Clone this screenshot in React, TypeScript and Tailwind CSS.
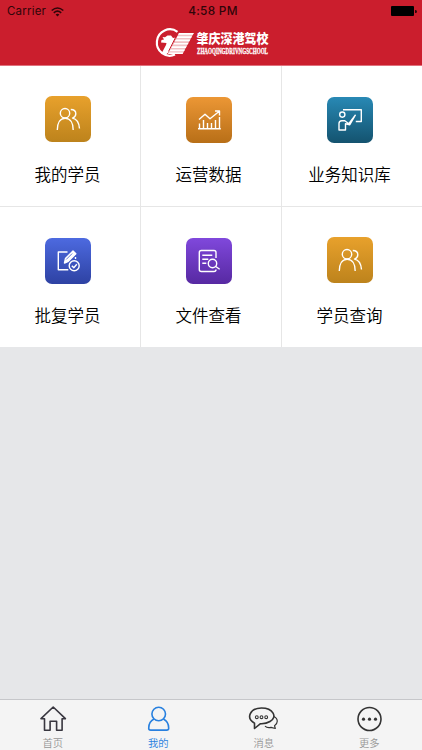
import React from 'react';

const CJK = "font-['Noto_Sans_CJK_SC',sans-serif]";

function People() {
  return (
    <g>
      <circle cx="20" cy="17.200" r="4.700" />
      <path d="M12.300 34c0-7.200 3-11.800 7.900-11.800s8 4.600 8 11.800" />
      <path d="M25.800 13.500c3.200 0 5 1.800 5 4.300 0 2-1 3.500-3.300 4.300 4 .7 6.500 4.200 7 10.400" />
    </g>
  );
}

function Chart() {
  return (
    <g>
      <path d="M13 22.500l6-5.300 5 4.600L33 14.500M29 14h4.500v4.500" />
      <path d="M12 31.700h22.800M13.500 31v-4.500M17.500 31v-8M21.500 31v-5M25.500 31v-5M29.500 31v-8M33.500 31V20" />
    </g>
  );
}

function Teacher() {
  return (
    <g>
      <circle cx="15.300" cy="17.600" r="2.600" />
      <path d="M16 12.800h18.300v11.700h-5.500M12 33v-6.500c0-2 .8-2.800 2.800-2.800h3l4 3 6.500-8.500-5.500 9.500-4.300-1V33z" />
    </g>
  );
}

function Edit() {
  return (
    <g>
      <path d="M22.500 14H13.300v17.700h10M30.500 21v-2" />
      <path d="M19.500 25l1-4.500 7.500-7.500 2.800 2.800-7.500 7.500z" fill="white" />
      <path d="M21.200 21.500l6-6" stroke="#405acb" strokeWidth=".8" />
      <circle cx="29.200" cy="27.800" r="5" />
      <path d="M26.800 27.800l2 2 3-3.500" />
    </g>
  );
}

function Search() {
  return (
    <g>
      <path d="M30 20v-5.500c0-1.500-.7-2-2-2H15.300c-1.300 0-2 .7-2 2v17c0 1.300.7 2 2 2H28c1.300 0 2-.7 2-2" />
      <path d="M16.300 17.300h10M16.300 21.300h6M16.300 25.300h4" />
      <circle cx="26.500" cy="25.500" r="4.200" />
      <path d="M29.700 28.500l4 2.800" />
    </g>
  );
}

const items = [
  { label: '我的学员', icon: People, box: 'mt-[30px] from-[#e8a12c] to-[#bd831c]' },
  { label: '运营数据', icon: Chart, box: 'mt-[31px] from-[#ec9735] to-[#b86f17]' },
  { label: '业务知识库', icon: Teacher, box: 'mt-[31px] from-[#2889b5] to-[#14536f]' },
  { label: '批复学员', icon: Edit, box: 'mt-[31px] from-[#4d6ae0] to-[#2e42a3]' },
  { label: '文件查看', icon: Search, box: 'mt-[31px] from-[#8048dc] to-[#5729a2]' },
  { label: '学员查询', icon: People, box: 'mt-[30px] from-[#e8a12c] to-[#bd831c]' },
];

function Emblem() {
  return (
    <svg className="h-[34px] w-[42px]" viewBox="152 26 42 34" fill="white">
      <path d="M177.500 31.800A13 13.200 0 1 0 175 54.600" fill="none" stroke="white" strokeWidth="2.200" />
      <path d="M179 33h14.800L182.500 54h-14.500z" opacity=".72" />
      <path d="M179 33h14.800l-.9 1.700h-14.800zM177.500 36.300h14.500l-.9 1.700h-14.500zM175.700 39.600h14.600l-.9 1.700h-14.500zM174 42.900h14.500l-.9 1.700H173zM172 46.200h14.700l-.9 1.700h-14.500zM170.500 49.500h14.500l-.9 1.700h-14.500zM168.800 52.400h14.600l-.9 1.600H168z" />
      <path d="M162.500 37l2.500.3 2.500-1.800h3.500l2 2.500 3-.5-6.500 14-3.500 3-4.500-1 4.500-8.500.5-2-5.500-.5.5-2.500 2.500-.5z" />
      <path d="M176.500 35.500l-8 16" fill="none" stroke="#cb1e2d" strokeWidth="1" />
    </svg>
  );
}

function Header() {
  return (
    <header className="h-[66px] border-b border-[#e0717d] bg-[#cb1e2d]">
      <div className="grid h-[22px] grid-cols-3 items-center pr-[5px] pl-[7px] font-['Inter',sans-serif] text-[#300509]">
        <div className="flex items-center gap-[5px] pt-px text-[11.500px] tracking-[0.200px]">
          Carrier
          <svg className="h-[10px] w-[13px]" viewBox="0 0 13 10" fill="none" stroke="#300509" strokeWidth="1.600">
            <path d="M.7 3.500q5.800-5 11.600 0M2.800 5.800q3.700-3.200 7.400 0" />
            <path d="M4.600 7.400q1.900-1.500 3.800 0L6.500 9.400z" fill="#300509" stroke="none" />
          </svg>
        </div>
        <div className="pt-px pl-[2px] text-center text-[11.800px] font-medium tracking-[0.300px] whitespace-nowrap">4:58 PM</div>
        <div className="flex items-center justify-end gap-px">
          <span className="h-[10px] w-[23px] rounded-[1px] bg-black" />
          <span className="h-[3px] w-[2px] rounded-r bg-black/80" />
        </div>
      </div>
      <div className="flex justify-center pt-[4px] pl-px text-white">
        <Emblem />
        <svg className="h-[34px] w-[78px] overflow-visible" viewBox="194 26 78 34" fill="white">
          <text x="196.500" y="42.600" fontSize="13" fontWeight="900" textLength="72" lengthAdjust="spacingAndGlyphs" fontFamily="Noto Sans CJK SC, sans-serif">肇庆深港驾校</text>
          <text x="197" y="54.300" fontSize="7.800" fontWeight="700" stroke="white" strokeWidth=".3" textLength="71" lengthAdjust="spacingAndGlyphs" fontFamily="Liberation Serif, serif">ZHAOQINGDRIVNGSCHOOL</text>
        </svg>
      </div>
    </header>
  );
}

const tabs = [
  {
    label: '首页', color: 'text-[#969696]', stroke: '#38363f',
    art: <path d="M4 14.700L16.200 3l12.200 11.700h-3.300v11.500h-5.500v-9h-6.500v9H7.500V14.700z" />,
  },
  {
    label: '我的', color: 'text-[#2880df]', stroke: '#2880df',
    art: <><circle cx="15.700" cy="10" r="6.800" /><path d="M11 15c-3.500 1.700-5.300 5-5.300 9.200 0 1.200.8 1.900 2 1.900h16c1.200 0 2-.7 2-1.900 0-4.200-1.900-7.500-5.300-9.200" /></>,
  },
  {
    label: '消息', color: 'text-[#969696]', stroke: '#333333',
    art: <><path d="M6.500 24.500v-5.300C-2.500 14 2 4 13.500 4S30 13 22 17.500c-2.500 1.500-6 2.400-9.500 2.200z" /><path d="M25.800 12.500c5 2.500 4 7.300.7 9.200l.8 2.800-4.300-1.200c-2.300.5-4.500.2-6-1.200" strokeWidth="1.200" /><g strokeWidth="1.100"><circle cx="8.800" cy="13.200" r="1.400" /><circle cx="13.500" cy="13.200" r="1.400" /><circle cx="18.200" cy="13.200" r="1.400" /></g></>,
  },
  {
    label: '更多', color: 'text-[#969696]', stroke: '#333333',
    art: <><circle cx="15.500" cy="15" r="11.500" /><g fill="#333" stroke="none"><circle cx="9.500" cy="15.200" r="1.600" /><circle cx="15.500" cy="15.200" r="1.600" /><circle cx="21.500" cy="15.200" r="1.600" /></g></>,
  },
];

export default function App() {
  return (
    <div className={`flex h-[750px] w-[422px] flex-col overflow-hidden bg-[#e6e7e9] ${CJK}`}>
      <Header />
      <main className="flex-1">
        <div className="grid grid-cols-[140px_140px_140px] grid-rows-[140px_140px] gap-px bg-[#e6e6e6]">
          {items.map(({ label, icon: Icon, box }) => (
            <div key={label} className="flex flex-col items-center bg-white pr-[5px]">
              <div className={`h-[46px] w-[46px] shrink-0 rounded-[7px] bg-linear-to-b ${box}`}>
                <svg viewBox="0 0 46 46" fill="none" stroke="white" strokeWidth="1.400" strokeLinejoin="round"><Icon /></svg>
              </div>
              <div className="mt-auto mb-[19px] text-[16.500px] leading-[26px] font-[350] whitespace-nowrap text-black">{label}</div>
            </div>
          ))}
        </div>
      </main>
      <nav className="grid h-[51px] grid-cols-4 border-t border-[#c6c7ca] bg-[#f4f4f4]">
        {tabs.map(({ label, color, stroke, art }) => (
          <div key={label} className={`flex flex-col items-center pt-[4px] ${color}`}>
            <svg className="h-[30px] w-[31px] shrink-0" viewBox="0 0 31 30" fill="none" stroke={stroke} strokeWidth="1.600" strokeLinejoin="round">{art}</svg>
            <span className="pt-px text-[10.300px] leading-[15px] font-[350]">{label}</span>
          </div>
        ))}
      </nav>
    </div>
  );
}
